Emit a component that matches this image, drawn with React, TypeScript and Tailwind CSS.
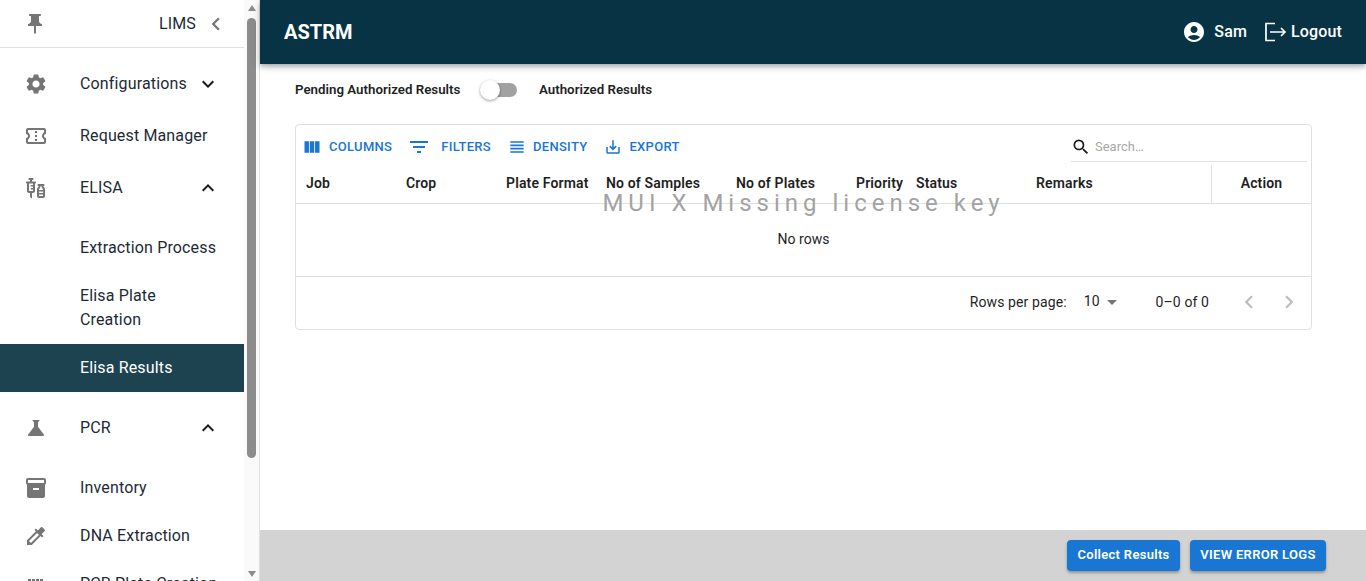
// App.tsx
import type { ReactNode } from "react";
import {
  MdPushPin,
  MdSettings,
  MdOutlineConfirmationNumber,
  MdOutlineVaccines,
  MdScience,
  MdInventory2,
  MdColorize,
  MdKeyboardArrowLeft,
  MdKeyboardArrowRight,
  MdExpandMore,
  MdExpandLess,
  MdViewColumn,
  MdFilterList,
  MdViewHeadline,
  MdSaveAlt,
  MdAccountCircle,
  MdSearch,
  MdArrowDropDown,
} from "react-icons/md";

const COLUNAS = [
  { nome: "Job", largura: "w-[100px]" },
  { nome: "Crop", largura: "w-[100px]" },
  { nome: "Plate Format", largura: "w-[100px]" },
  { nome: "No of Samples", largura: "w-[130px]" },
  { nome: "No of Plates", largura: "w-[120px]" },
  { nome: "Priority", largura: "w-[60px]" },
  { nome: "Status", largura: "w-[120px]" },
  { nome: "Remarks", largura: "w-[185px]" },
];

function ItemMenu({
  icone,
  texto,
  seta,
  classe = "h-12",
}: {
  icone?: ReactNode;
  texto: ReactNode;
  seta?: ReactNode;
  classe?: string;
}) {
  return (
    <div className={`flex items-center text-[16px] leading-6 tracking-[0.15px] text-[#1c2b36] ${classe}`}>
      <div className="flex w-[80px] shrink-0 justify-center pr-2 text-[#757575]">{icone}</div>
      <div className="min-w-0 flex-1">{texto}</div>
      {seta && <div className="mr-6 flex w-6 justify-center text-[#1a1a1a]">{seta}</div>}
    </div>
  );
}

function Sidebar() {
  return (
    <aside className="flex h-full w-[260px] shrink-0 border-r border-[#e0e0e0]">
      <div className="h-full w-[244px] shrink-0 overflow-hidden">
        <div className="flex h-12 items-center border-b border-[#e0e0e0]">
          <div className="flex w-[70px] justify-center text-[#757575]">
            <MdPushPin size={24} />
          </div>
          <span className="ml-auto text-[16px] tracking-[0.15px] text-[#1c2b36]">LIMS</span>
          <MdKeyboardArrowLeft size={26} className="ml-[7px] mr-[15px] text-[#757575]" />
        </div>

        <div className="pt-3">
          <ItemMenu icone={<MdSettings size={24} />} texto="Configurations" seta={<MdExpandMore size={24} />} />
          <div className="h-1" />
          <ItemMenu icone={<MdOutlineConfirmationNumber size={24} />} texto="Request Manager" />
          <div className="h-1" />
          <ItemMenu icone={<MdOutlineVaccines size={24} />} texto="ELISA" seta={<MdExpandLess size={24} />} />
          <div className="h-3" />
          <ItemMenu texto="Extraction Process" />
          <ItemMenu texto="Elisa Plate Creation" classe="h-[72px] pr-10" />
          <div className="flex h-12 items-center bg-[#1d4351] pl-[80px] text-[16px] tracking-[0.15px] text-white">
            Elisa Results
          </div>
          <div className="h-3" />
          <ItemMenu icone={<MdScience size={24} />} texto="PCR" seta={<MdExpandLess size={24} />} />
          <div className="h-3" />
          <ItemMenu icone={<MdInventory2 size={24} />} texto="Inventory" />
          <ItemMenu icone={<MdColorize size={24} />} texto="DNA Extraction" />
          <ItemMenu
            icone={
              <svg width="24" height="24" viewBox="0 0 24 24" fill="currentColor">
                <path d="M4 7h3v3H4zM8 7h3v3H8zM12 7h3v3h-3zM16 7h3v3h-3z" />
              </svg>
            }
            texto="PCR Plate Creation"
          />
        </div>
      </div>

      {/* Barra de rolagem */}
      <div className="flex h-full flex-1 flex-col items-center bg-[#fafafa]">
        <div className="mt-[5px] h-0 w-0 border-x-[4.5px] border-b-[6px] border-x-transparent border-b-[#8c8c8c]" />
        <div className="mt-[7px] h-[440px] w-[9px] rounded-full bg-[#8c8c8c]" />
        <div className="mt-auto mb-[4px] h-0 w-0 border-x-[4.5px] border-t-[6px] border-x-transparent border-t-[#8c8c8c]" />
      </div>
    </aside>
  );
}

function BotaoToolbar({ icone, texto }: { icone: ReactNode; texto: string }) {
  return (
    <div className="flex items-center text-[13px] font-medium tracking-[0.3px] text-[#1976d2]">
      {icone}
      <span>{texto}</span>
    </div>
  );
}

function Tabela() {
  return (
    <div className="relative mx-[35px] mt-[10px] h-[206px] w-[1017px] rounded border border-[#e0e0e0]">
      <div className="flex h-[40px] items-center pl-[6px] pr-[4px] pt-[3px]">
        <BotaoToolbar icone={<MdViewColumn size={20} className="mr-[7px]" />} texto="COLUMNS" />
        <BotaoToolbar icone={<MdFilterList size={24} className="ml-[15px] mr-[10px]" />} texto="FILTERS" />
        <BotaoToolbar icone={<MdViewHeadline size={20} className="ml-[16px] mr-[6px]" />} texto="DENSITY" />
        <BotaoToolbar icone={<MdSaveAlt size={18} className="ml-[17px] mr-[7px]" />} texto="EXPORT" />
        <div className="ml-auto mb-[3px] flex h-[30px] w-[236px] items-center self-end border-b border-[#e0e0e0] text-[13px] text-[#a8a8a8]">
          <MdSearch size={20} className="mr-[4px] text-[#1a1a1a]" />
          Search…
        </div>
      </div>

      <div className="flex h-[39px] border-b border-[#e0e0e0] text-[14px] font-semibold tracking-[0.15px] text-[#1f1f1f]">
        {COLUNAS.map((c) => (
          <div key={c.nome} className={`flex items-center whitespace-nowrap pb-[2px] pl-[10px] ${c.largura}`}>
            {c.nome}
          </div>
        ))}
        <div className="flex flex-1 items-center justify-center border-l border-[#e0e0e0] pb-[2px]">Action</div>
      </div>

      <div className="flex h-[73px] items-center justify-center border-b border-[#e0e0e0] pb-[2px] text-[14px] text-[#1f1f1f]">
        No rows
      </div>

      <div className="flex h-[52px] items-center pb-[2px] text-[14px] tracking-[0.1px] text-[#1f1f1f]">
        <div className="ml-auto">Rows per page:</div>
        <div className="ml-[17px] flex items-center">
          <span className="-mt-[2px]">10</span>
          <MdArrowDropDown size={24} className="ml-0 text-[#757575]" />
        </div>
        <div className="ml-[32px]">0–0 of 0</div>
        <MdKeyboardArrowLeft size={26} className="ml-[27px] text-[#bdbdbd]" />
        <MdKeyboardArrowRight size={26} className="ml-[14px] mr-[9px] text-[#bdbdbd]" />
      </div>

      {/* Marca d'água por cima da grade */}
      <div className="pointer-events-none absolute inset-x-0 top-[60px] text-center text-[24px] tracking-[5px] text-[#a3a3a3]">
        MUI X Missing license key
      </div>
    </div>
  );
}

export default function App() {
  return (
    <div className="flex h-screen w-screen overflow-hidden bg-white font-['Roboto',sans-serif]">
      <Sidebar />
      <main className="flex h-full min-w-0 flex-1 flex-col">
        <header className="flex h-16 shrink-0 items-center bg-[#083344] pl-6 pr-6 text-white shadow-[0_2px_4px_-1px_rgba(0,0,0,0.2),0_4px_5px_0_rgba(0,0,0,0.14),0_1px_10px_0_rgba(0,0,0,0.12)]">
          <span className="text-[20px] font-bold">ASTRM</span>
          <MdAccountCircle size={24} className="ml-auto" />
          <span className="ml-2 text-[16px] font-medium tracking-[0.15px]">Sam</span>
          <svg width="24" height="24" viewBox="0 0 24 24" fill="none" stroke="currentColor" strokeWidth="1.7" className="ml-[17px]">
            <path d="M11 3.5H2v17h9M6 12h15M17 8l4 4-4 4" />
          </svg>
          <span className="ml-[3px] text-[16px] font-medium tracking-[0.15px]">Logout</span>
        </header>

        <div className="flex-1">
          <div className="flex h-[50px] items-center pl-[35px] pt-px text-[13.3px] font-semibold text-[#1f1f1f]">
            <span className="w-[188px]">Pending Authorized Results</span>
            <div className="relative h-[14px] w-[34px] rounded-full bg-[#a1a1a1]">
              <div className="absolute -left-[3px] -top-[3px] h-5 w-5 rounded-full bg-white shadow-[0_1px_3px_rgba(0,0,0,0.4)]" />
            </div>
            <span className="ml-[22px]">Authorized Results</span>
          </div>
          <Tabela />
        </div>

        <footer className="flex h-[51px] shrink-0 items-center justify-end gap-[10px] bg-[#d3d3d3] pr-10">
          <div className="flex h-[31px] w-[113px] items-center justify-center rounded bg-[#1976d2] pb-[2px] text-[13px] font-semibold tracking-[0.3px] text-white shadow-[0_2px_3px_rgba(0,0,0,0.3)]">
            Collect Results
          </div>
          <div className="flex h-[31px] w-[136px] items-center justify-center rounded bg-[#1976d2] pb-[2px] text-[13px] font-semibold tracking-[0.3px] text-white shadow-[0_2px_3px_rgba(0,0,0,0.3)]">
            VIEW ERROR LOGS
          </div>
        </footer>
      </main>
    </div>
  );
}
